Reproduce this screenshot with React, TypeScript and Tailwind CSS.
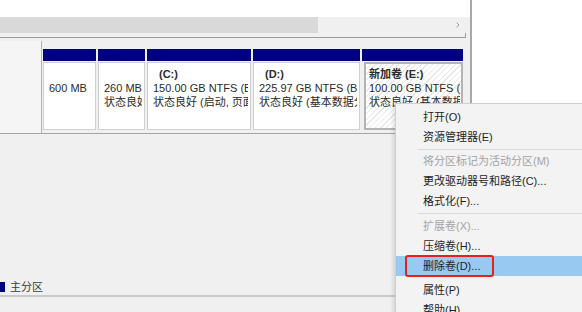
import { ChevronRight } from "lucide-react";

type Part = {
  width: string;
  title?: string;
  indent?: boolean;
  size: string;
  status?: string;
  selected?: boolean;
};

const parts: Part[] = [
  { width: "w-[53px]", size: "600 MB" },
  { width: "w-[47px]", size: "260 MB", status: "状态良好 (EFI)" },
  {
    width: "w-[104px]",
    title: "(C:)",
    indent: true,
    size: "150.00 GB NTFS (BitLocker)",
    status: "状态良好 (启动, 页面文件)",
  },
  {
    width: "w-[107px]",
    title: "(D:)",
    indent: true,
    size: "225.97 GB NTFS (BitLocker)",
    status: "状态良好 (基本数据分区)",
  },
  {
    width: "w-[101px]",
    title: "新加卷 (E:)",
    size: "100.00 GB NTFS (BitLocker)",
    status: "状态良好 (基本数据分区)",
    selected: true,
  },
];

type Item =
  | { kind: "item"; label: string; disabled?: boolean; active?: boolean }
  | { kind: "sep"; h: string; line?: boolean };

const menu: Item[] = [
  { kind: "item", label: "打开(O)" },
  { kind: "item", label: "资源管理器(E)" },
  { kind: "sep", h: "h-[4px]", line: true },
  { kind: "item", label: "将分区标记为活动分区(M)", disabled: true },
  { kind: "item", label: "更改驱动器号和路径(C)..." },
  { kind: "item", label: "格式化(F)..." },
  { kind: "sep", h: "h-[5px]", line: true },
  { kind: "item", label: "扩展卷(X)...", disabled: true },
  { kind: "item", label: "压缩卷(H)..." },
  { kind: "item", label: "删除卷(D)...", active: true },
  { kind: "sep", h: "h-[4px]" },
  { kind: "item", label: "属性(P)" },
  { kind: "item", label: "帮助(H)" },
];

function PartitionBox({ p }: { p: Part }) {
  return (
    <div className={`${p.width} flex flex-col`}>
      <div className="h-[12px] bg-[#000080]" />
      <div
        className={
          p.selected
            ? "mt-[1px] ml-[2px] h-[68px] border-2 border-[#b4b4b4] bg-[repeating-linear-gradient(135deg,#ffffff_0px,#ffffff_3px,#e6e6e6_3px,#e6e6e6_4px)] pl-[3px] pt-[3px] pr-[1px] overflow-hidden"
            : "mt-[1px] h-[68px] border border-[#cfcfcf] bg-white pl-[5px] pt-[4px] pr-[2px] overflow-hidden"
        }
      >
        <div className="text-[11px] leading-[14px] text-[#2b2b2b] whitespace-nowrap">
          <div className={`h-[14px] overflow-hidden font-bold ${p.indent ? "pl-[6px]" : ""}`}>{p.title ?? ""}</div>
          <div className="h-[14px] overflow-hidden">{p.size}</div>
          <div className="h-[14px] overflow-hidden">{p.status ?? ""}</div>
        </div>
      </div>
    </div>
  );
}

export default function App() {
  return (
    <div
      className="relative w-[582px] h-[312px] overflow-hidden bg-[#f0f0f0]"
      style={{ fontFamily: '"Liberation Sans", "Noto Sans CJK SC", sans-serif' }}
    >
      <div className="flex h-full">
        <div className="w-[470px] flex flex-col">
          <div className="h-[17px] bg-white" />
          <div className="h-[16px] flex bg-[#f0f0f0]">
            <div className="w-[318px] bg-[#d9d9d9]" />
            <div className="flex-1" />
            <div className="w-[24px] flex items-center justify-center text-[#9a9a9a]">
              <ChevronRight size={8} strokeWidth={3} />
            </div>
          </div>
          <div className="h-[5px] w-[466px] border-b border-r border-[#9c9c9c]" />
          <div className="h-[3px]" />
          <div className="w-[466px] h-[93px] flex border-b border-[#a6a6a6]">
            <div className="w-[42px] border-r border-[#b0b0b0] bg-[#f5f5f5]" />
            <div className="flex gap-[2px] pl-[1px] pt-[8px]">
              {parts.map((p, i) => (
                <PartitionBox key={i} p={p} />
              ))}
            </div>
          </div>
          <div className="mt-auto h-[14px] flex items-center gap-[5px]">
            <div className="w-[5px] h-[10px] bg-[#000080]" />
            <span className="text-[11px] text-[#3a3a3a]">主分区</span>
          </div>
          <div className="h-[1px]" />
          <div className="h-[2px] bg-[#cacaca]" />
          <div className="h-[15px]" />
        </div>
        <div className="w-[2px] bg-[#a8a8a8]" />
        <div className="flex-1 bg-white" />
      </div>

      <div className="absolute left-[395px] top-[103px] w-[200px] border border-[#cfcfcf] bg-[#f3f3f3] pt-[3px] shadow-[-2px_2px_4px_rgba(0,0,0,0.12)]">
        {menu.map((m, i) =>
          m.kind === "sep" ? (
            <div key={i} className={`${m.h} flex items-center pl-[22px]`}>
              {m.line && <div className="h-px flex-1 bg-[#d9d9d9]" />}
            </div>
          ) : (
            <div
              key={i}
              className={`relative h-[20px] flex items-center pl-[27px] text-[11px] ${
                m.disabled ? "text-[#a3a3a3]" : "text-[#1e1e1e]"
              } ${m.active ? "bg-[#98c9f1]" : ""}`}
            >
              {m.label}
              {m.active && (
                <div className="absolute left-[9px] top-[-1px] w-[89px] h-[22px] rounded-[3px] border-2 border-[#e3221c]" />
              )}
            </div>
          )
        )}
      </div>
    </div>
  );
}
